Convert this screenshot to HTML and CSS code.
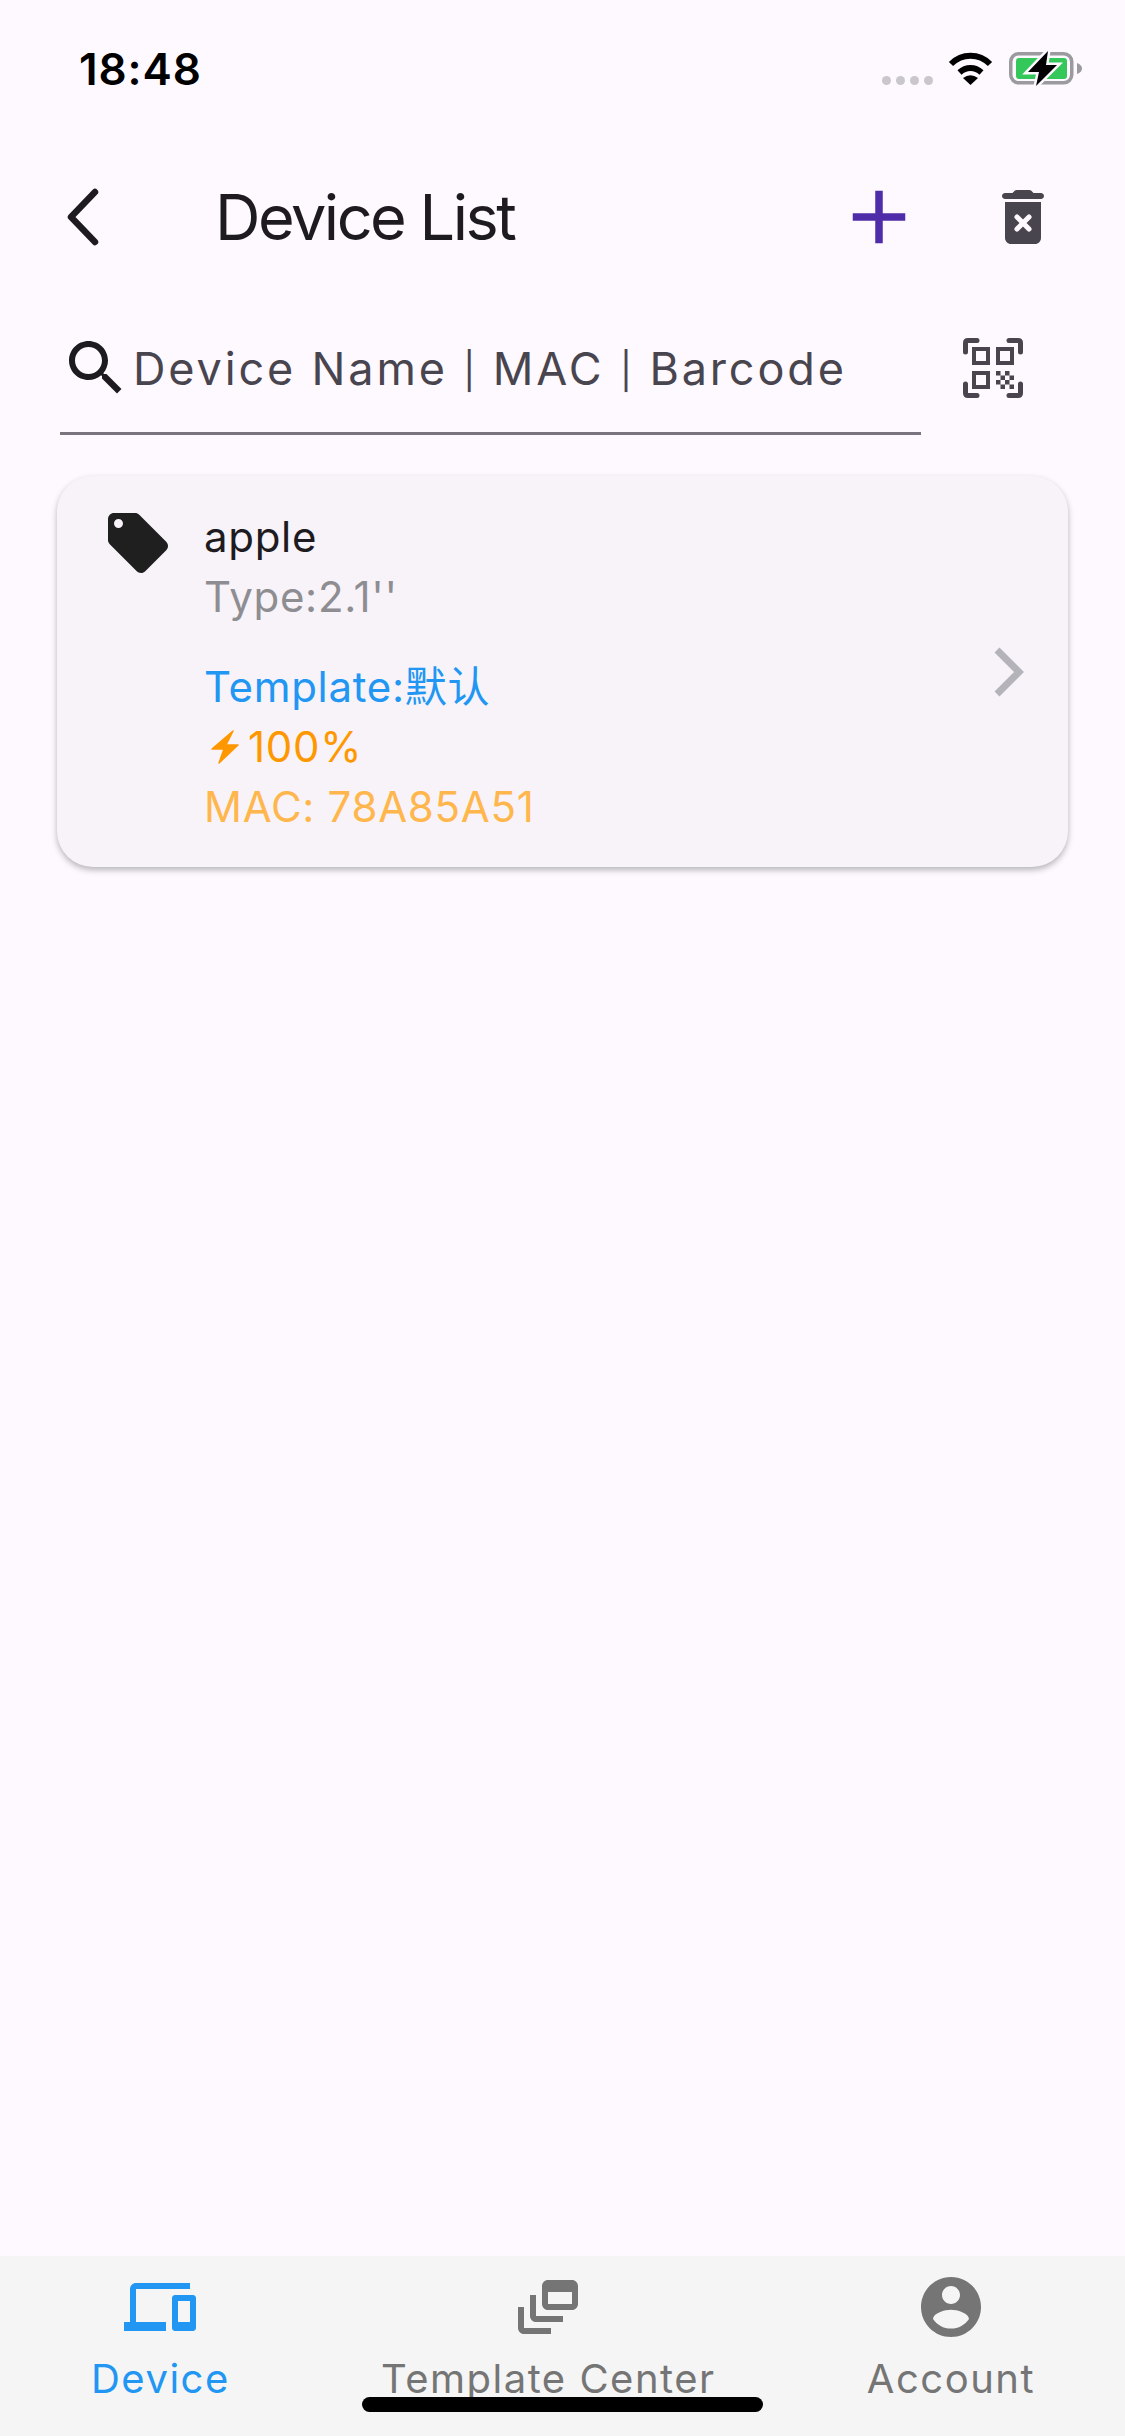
FILE: index.html
```html
<!DOCTYPE html>
<html lang="en">
<head>
    <meta charset="UTF-8">
    <meta name="viewport" content="width=device-width, initial-scale=1.0">
    <title>Device List</title>
    <link rel="stylesheet" href="styles.css">
</head>
<body>
    <div class="status-bar">
        <span class="time">18:48</span>
        <div class="status-icons">
            <div class="signal"><i></i><i></i><i></i><i></i></div>
            <svg class="wifi" width="45" height="33" viewBox="0 0 45 33">
                <path d="M3 12C14 1 31 1 42 12M11.500 20.500C18 14.500 27 14.500 33.500 20.500" fill="none" stroke="#000" stroke-width="6"/>
                <path d="M22.500 33L15 26Q22.500 20.500 30 26Z"/>
            </svg>
            <svg class="battery" width="73" height="35" viewBox="0 -1 73 35">
                <rect x="1.750" y="1.750" width="61" height="29" rx="8" fill="none" stroke="#9b9a9e" stroke-width="3.500"/>
                <rect x="7" y="6" width="51" height="21" rx="3" fill="#34c759"/>
                <path d="M68 11Q73 13 73 16.500Q73 20 68 22Z" fill="#9b9a9e"/>
                <path d="M39 -1L19 20H30L27 34L48 13H37Z" stroke="#fdf9ff" stroke-width="5" paint-order="stroke"/>
            </svg>
        </div>
    </div>

    <header class="app-bar">
        <svg class="icon-back" width="72" height="72" viewBox="0 0 72 72">
            <path d="M47 11L23 36L47 61" fill="none" stroke="#1d1b20" stroke-width="6.500" stroke-linecap="round" stroke-linejoin="round"/>
        </svg>
        <h1 class="title">Device List</h1>
        <svg class="icon-add" width="90" height="90" viewBox="0 0 24 24">
            <path d="M19 13h-6v6h-2v-6H5v-2h6V5h2v6h6v2z"/>
        </svg>
        <svg class="icon-delete" width="72" height="72" viewBox="0 0 24 24">
            <path d="M6 19c0 1.100.9 2 2 2h8c1.100 0 2-.9 2-2V7H6v12z"/>
            <path d="M18 4h-2.500l-.71-.71c-.18-.18-.44-.29-.7-.29H9.910c-.26 0-.52.11-.7.29L8.500 4H6c-.55 0-1 .45-1 1s.45 1 1 1h12c.55 0 1-.45 1-1s-.45-1-1-1z"/>
            <path d="M10 12l4 4M14 12l-4 4" fill="none" stroke="#fdf9ff" stroke-width="1.700" stroke-linecap="round"/>
        </svg>
    </header>

    <div class="search-row">
        <div class="search-field">
            <svg class="icon-search" width="72" height="72" viewBox="0 0 24 24">
                <path d="M15.500 14h-.79l-.28-.27C15.410 12.590 16 11.110 16 9.500 16 5.910 13.090 3 9.500 3S3 5.910 3 9.500 5.910 16 9.500 16c1.610 0 3.090-.59 4.230-1.570l.27.28v.79l5 4.990L20.490 19l-4.990-5zm-6 0C7.010 14 5 11.990 5 9.500S7.010 5 9.500 5 14 7.010 14 9.500 11.990 14 9.500 14z"/>
            </svg>
            <span class="placeholder">Device Name <span class="sep">|</span> MAC <span class="sep">|</span> Barcode</span>
        </div>
        <svg class="icon-qr" width="60" height="60" viewBox="0 0 60 60">
            <path d="M2.500 14V5Q2.500 2.500 5 2.500H14M46 2.500H55Q57.500 2.500 57.500 5V14M2.500 46V55Q2.500 57.500 5 57.500H14M46 57.500H55Q57.500 57.500 57.500 55V46" fill="none" stroke="#49454f" stroke-width="5" stroke-linecap="round"/>
            <path d="M11 11h14v14H11zM35 11h14v14H35zM11 35h14v14H11z" fill="none" stroke="#49454f" stroke-width="4"/>
            <path d="M33 33h4.500v4.500H33zM42 33h4.500v4.500H42zM37.500 37.500H42V42H37.500zM46.500 37.500H51V42H46.500zM33 42h4.500v4.500H33zM42 42h4.500v4.500H42zM37.500 46.500H42V51H37.500zM46.500 46.500H51V51H46.500z" fill="#49454f"/>
        </svg>
    </div>

    <section class="device-card">
        <svg class="icon-tag" width="72" height="72" viewBox="0 0 24 24">
            <path d="M21.410 11.580l-9-9C12.050 2.220 11.550 2 11 2H4c-1.100 0-2 .9-2 2v7c0 .55.22 1.050.59 1.420l9 9c.36.36.86.58 1.410.58.55 0 1.050-.22 1.410-.59l7-7c.37-.36.59-.86.59-1.410 0-.55-.23-1.060-.59-1.420zM5.500 7C4.670 7 4 6.330 4 5.500S4.670 4 5.500 4 7 4.670 7 5.500 6.330 7 5.500 7z"/>
        </svg>
        <div class="device-info">
            <div class="device-name">apple</div>
            <div class="device-type">Type:2.1''</div>
            <div class="device-template">Template:默认</div>
            <div class="device-power">
                <svg width="28" height="34" viewBox="0 0 28 34">
                    <path d="M22 1L1 19H13L8 33L27 15H15Z" fill="#ff9800" stroke="#ff9800" stroke-width="1.500" stroke-linejoin="round"/>
                </svg>
                <span>100%</span>
            </div>
            <div class="device-mac">MAC: 78A85A51</div>
        </div>
        <svg class="icon-more" width="30" height="50" viewBox="0 0 30 50">
            <path d="M3 3L25 25L3 47" fill="none" stroke="#b5b3ba" stroke-width="7"/>
        </svg>
    </section>

    <nav class="bottom-nav">
        <div class="nav-item active">
            <svg width="72" height="72" viewBox="0 0 24 24">
                <path d="M4 6h18V4H4c-1.100 0-2 .9-2 2v11H0v3h14v-3H4V6zm19 2h-6c-.55 0-1 .45-1 1v10c0 .55.45 1 1 1h6c.55 0 1-.45 1-1V9c0-.55-.45-1-1-1zm-1 9h-4v-7h4v7z"/>
            </svg>
            <span>Device</span>
        </div>
        <div class="nav-item">
            <svg width="72" height="72" viewBox="0 0 24 24">
                <path d="M8 8H6v7c0 1.100.9 2 2 2h9v-2H8V8z"/>
                <path d="M20 3h-8c-1.100 0-2 .9-2 2v6c0 1.100.9 2 2 2h8c1.100 0 2-.9 2-2V5c0-1.100-.9-2-2-2zm0 8h-8V7h8v4z"/>
                <path d="M4 12H2v7c0 1.100.9 2 2 2h9v-2H4v-7z"/>
            </svg>
            <span>Template Center</span>
        </div>
        <div class="nav-item">
            <svg width="72" height="72" viewBox="0 0 24 24">
                <path d="M12 2C6.480 2 2 6.480 2 12s4.480 10 10 10 10-4.480 10-10S17.520 2 12 2zm0 3c1.660 0 3 1.340 3 3s-1.340 3-3 3-3-1.340-3-3 1.340-3 3-3zm0 14.200c-2.500 0-4.710-1.280-6-3.220.03-1.990 4-3.080 6-3.080 1.990 0 5.970 1.090 6 3.080-1.290 1.940-3.500 3.220-6 3.220z"/>
            </svg>
            <span>Account</span>
        </div>
        <div class="home-indicator"></div>
    </nav>
</body>
</html>
```

FILE: styles.css
```css
* {
    box-sizing: border-box;
}
body {
    font-family: Inter, "Noto Sans CJK SC", sans-serif;
    margin: 0;
    height: 2436px;
    display: flex;
    flex-direction: column;
    background-color: #fdf9ff;
    color: #1d1b20;
    overflow: hidden;
}
svg {
    display: block;
    flex-shrink: 0;
}

/* status bar */
.status-bar {
    height: 145px;
    padding: 42px 43px 0 79px;
    display: flex;
    justify-content: space-between;
    align-items: flex-start;
}
.time {
    font-size: 44px;
    line-height: 54px;
    font-weight: 600;
    color: #000;
    letter-spacing: 0.900px;
}
.status-icons {
    display: flex;
    align-items: flex-end;
    margin-top: 9px;
}
.signal {
    display: flex;
    gap: 5px;
    margin-bottom: 1px;
    margin-right: 15px;
}
.signal i {
    width: 9px;
    height: 9px;
    border-radius: 50%;
    background-color: #c9c7cc;
}
.wifi {
    margin-right: 16px;
    margin-bottom: 1px;
}

/* app bar */
.app-bar {
    height: 144px;
    padding-left: 48px;
    display: flex;
    align-items: center;
}
.title {
    margin: 0 0 0 95px;
    font-size: 63px;
    font-weight: 400;
    letter-spacing: -2.500px;
    flex: 1;
}
.icon-add {
    fill: #4f2da8;
    margin-right: 63px;
}
.icon-delete {
    fill: #49454f;
    margin-right: 66px;
}

/* search */
.search-row {
    height: 147px;
    padding-left: 60px;
    display: flex;
}
.search-field {
    width: 861px;
    height: 146px;
    border-bottom: 3px solid #79747e;
    display: flex;
    align-items: flex-start;
    padding-top: 43px;
}
.icon-search {
    fill: #1d1b20;
}
.placeholder {
    font-size: 45px;
    line-height: 72px;
    letter-spacing: 2.850px;
    color: #49454f;
    white-space: nowrap;
    margin-top: 1px;
    margin-left: 1px;
}
.sep {
    font-size: 36px;
    letter-spacing: 2px;
    vertical-align: 1px;
}
.icon-qr {
    margin: 49px 0 0 42px;
}

/* device card */
.device-card {
    margin: 40px 57px 0;
    height: 391px;
    border-radius: 36px;
    background-color: #f7f3f9;
    box-shadow: 0 3px 6px rgba(0, 0, 0, 0.28);
    padding: 31px 44px 0 45px;
    display: flex;
    align-items: flex-start;
}
.icon-tag {
    fill: #1f1f1f;
}
.device-info {
    margin-left: 30px;
    flex: 1;
    font-size: 42px;
    line-height: 60px;
    letter-spacing: 0.700px;
}
.device-type {
    color: #8e8d92;
}
.device-template {
    color: #2196f3;
    margin-top: 30px;
}
.device-power {
    color: #ff9800;
    display: flex;
    align-items: center;
    gap: 9px;
}
.device-power svg {
    margin-left: 7px;
}
.device-mac {
    color: #ffb74d;
}
.icon-more {
    margin-top: 140px;
}

/* bottom navigation */
.bottom-nav {
    position: relative;
    margin-top: auto;
    height: 180px;
    padding: 15px 90px 0 91px;
    background-color: #f5f5f5;
    display: flex;
    justify-content: space-between;
}
.nav-item {
    display: flex;
    flex-direction: column;
    align-items: center;
    color: #757575;
    fill: #757575;
}
.nav-item.active {
    color: #2196f3;
    fill: #2196f3;
}
.nav-item span {
    margin-top: 6px;
    font-size: 40px;
    line-height: 60px;
    letter-spacing: 1.500px;
    white-space: nowrap;
}
.home-indicator {
    position: absolute;
    left: 362px;
    top: 141px;
    width: 401px;
    height: 15px;
    border-radius: 8px;
    background-color: #000;
}
```
